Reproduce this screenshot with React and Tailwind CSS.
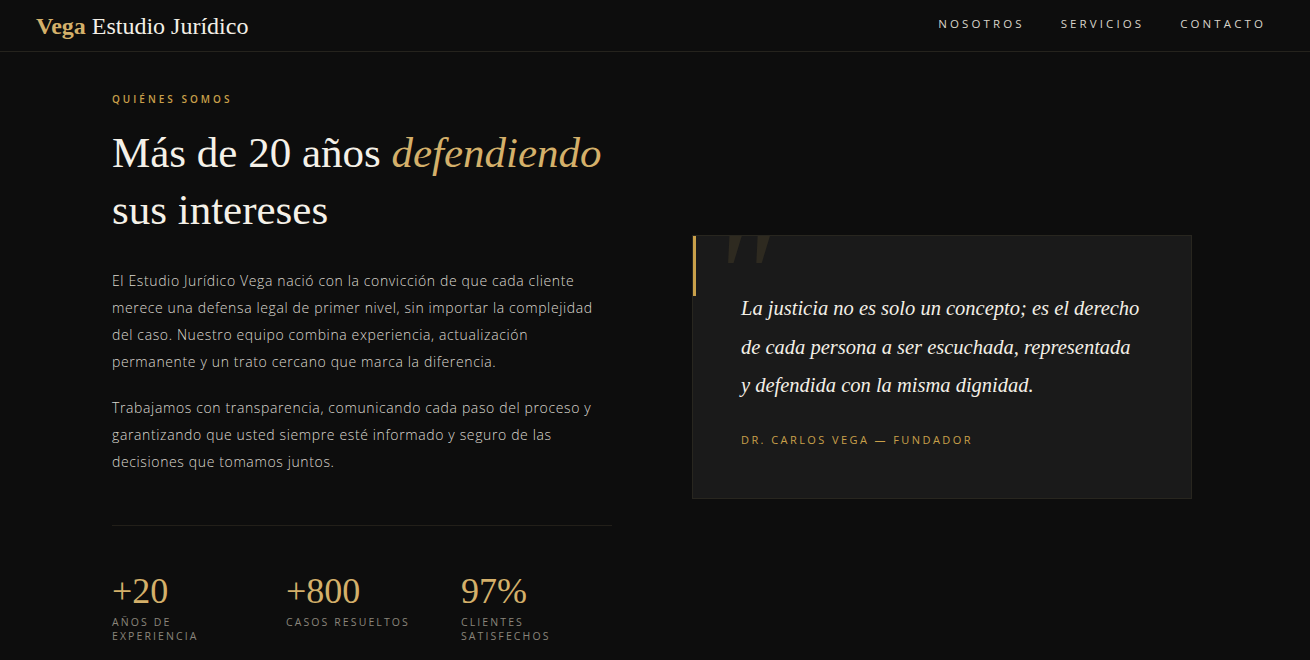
import React from "react";

const serif = { fontFamily: '"Liberation Serif", "DejaVu Serif", serif' };

export default function App() {
  return (
    <div className="min-h-[660px] bg-[#0d0d0d] text-white" style={{ fontFamily: '"Open Sans", "Liberation Sans", sans-serif' }}>
      <header className="flex h-[52px] items-center justify-between border-b border-[#25231d] pl-[36px] pr-[44px]">
        <div className="text-[24px] leading-none" style={serif}>
          <span className="font-semibold text-[#d4b06a]">Vega</span>{" "}
          <span className="text-[#f3efe6]">Estudio Jurídico</span>
        </div>
        <nav className="-mt-[3px] flex items-center gap-[36px] text-[11.5px] tracking-[0.27em] text-[#d8d4ca]">
          <span>NOSOTROS</span>
          <span>SERVICIOS</span>
          <span>CONTACTO</span>
        </nav>
      </header>

      <main className="grid grid-cols-[500px_500px] gap-x-[80px] pl-[112px] pt-[40px]">
        <section>
          <div className="text-[10px] font-semibold tracking-[0.3em] text-[#c9a04a]">QUIÉNES SOMOS</div>
          <h1 className="mt-[17px] text-[43px] leading-[57px] font-normal text-[#f5f1e8]" style={serif}>
            Más de 20 años <em className="text-[#d4b06a]">defendiendo</em>
            <br />
            sus intereses
          </h1>
          <div className="mt-[29px] text-[14px] leading-[27px] font-light tracking-[0.045em] text-[#dcd8cf]">
            <p>
              El Estudio Jurídico Vega nació con la convicción de que cada cliente merece una defensa legal de primer nivel, sin importar la complejidad del caso. Nuestro equipo combina experiencia, actualización permanente y un trato cercano que marca la diferencia.
            </p>
            <p className="mt-[19px]">
              Trabajamos con transparencia, comunicando cada paso del proceso y garantizando que usted siempre esté informado y seguro de las decisiones que tomamos juntos.
            </p>
          </div>
          <div className="mt-[50px] h-px w-[500px] bg-[#221f19]" />
          <div className="mt-[45px] grid grid-cols-[174px_175px_1fr]">
            <div>
              <div className="text-[36px] leading-[40px] text-[#d4b06a]" style={serif}>+20</div>
              <div className="mt-[4px] text-[10.5px] leading-[14px] tracking-[0.2em] text-[#8a857b]">AÑOS DE<br />EXPERIENCIA</div>
            </div>
            <div>
              <div className="text-[36px] leading-[40px] text-[#d4b06a]" style={serif}>+800</div>
              <div className="mt-[4px] text-[10.5px] leading-[14px] tracking-[0.2em] text-[#8a857b]">CASOS RESUELTOS</div>
            </div>
            <div>
              <div className="text-[36px] leading-[40px] text-[#d4b06a]" style={serif}>97%</div>
              <div className="mt-[4px] text-[10.5px] leading-[14px] tracking-[0.2em] text-[#8a857b]">CLIENTES<br />SATISFECHOS</div>
            </div>
          </div>
        </section>

        <section className="pt-[143px]">
          <div className="relative h-[264px] overflow-hidden border border-[#28261f] bg-[#1a1a1a] pl-[48px] pr-[30px] pt-[53px]">
            <div className="absolute left-0 top-0 h-[60px] w-[3px] bg-[#c9a04a]" />
            <div className="absolute left-[16px] top-[-36px] select-none text-[150px] italic leading-none text-[#2e2a20]" style={serif}>"</div>
            <p className="relative whitespace-nowrap text-[20.5px] italic leading-[38.5px] text-[#f3efe6]" style={serif}>
              La justicia no es solo un concepto; es el derecho
              <br />
              de cada persona a ser escuchada, representada
              <br />
              y defendida con la misma dignidad.
            </p>
            <div className="relative mt-[27px] text-[11px] tracking-[0.22em] text-[#c9a04a]">DR. CARLOS VEGA — FUNDADOR</div>
          </div>
        </section>
      </main>
    </div>
  );
}
